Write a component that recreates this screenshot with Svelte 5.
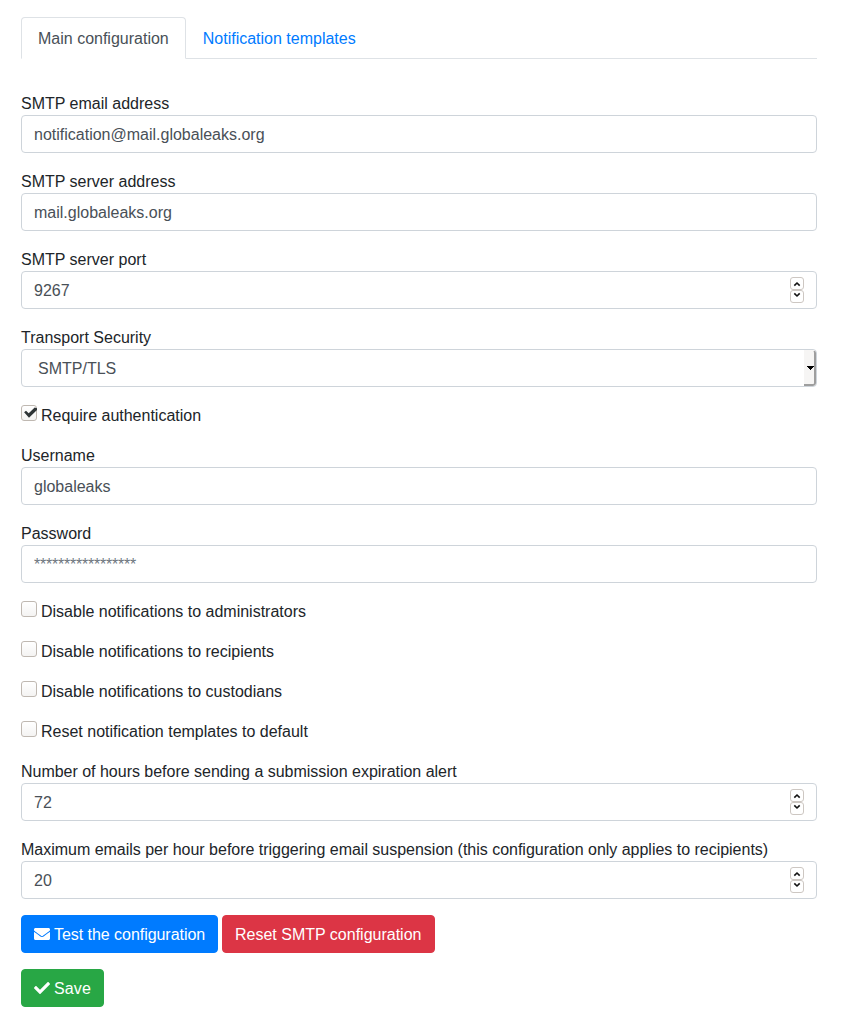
<script>
  let form = $state({
    email: 'notification@mail.globaleaks.org',
    server: 'mail.globaleaks.org',
    port: '9267',
    username: 'globaleaks',
    password: '',
    hours: '72',
    maximum: '20'
  });
  let authentication = $state(true);
  let options = $state([
    { label: 'Disable notifications to administrators', on: false },
    { label: 'Disable notifications to recipients', on: false },
    { label: 'Disable notifications to custodians', on: false },
    { label: 'Reset notification templates to default', on: false }
  ]);
  const step = (key, amount) => (form[key] = String(Number(form[key]) + amount));
</script>

{#snippet field(label, key, placeholder = '')}
  <label class="group">
    <span class="text">{label}</span>
    <input class="control" type="text" {placeholder} bind:value={form[key]} />
  </label>
{/snippet}

{#snippet number(label, key)}
  <div class="group">
    <label class="text" class:long={label.length > 40} for={key}>{label}</label>
    <div class="control numeric">
      <input id={key} type="text" inputmode="numeric" bind:value={form[key]} />
      <div class="spinner">
        <button type="button" aria-label="Increase" onclick={() => step(key, 1)}>
          <svg width="6" height="4" viewBox="0 0 6 4"><path d="M.3 3.6 3 1l2.7 2.6" /></svg>
        </button>
        <button type="button" aria-label="Decrease" onclick={() => step(key, -1)}>
          <svg class="down" width="6" height="4" viewBox="0 0 6 4"><path d="M.3.4 3 3 5.7.4" /></svg>
        </button>
      </div>
    </div>
  </div>
{/snippet}

{#snippet tick()}
  <svg class="tick" viewBox="0 0 16 16"><path d="M3.1 7.2 5 5.7l2.7 2.6L13.7 2.4 16 3.2V4.9L8 12.7Z" /></svg>
{/snippet}

<main>
  <ul class="tabs">
    <li><a class="active" href="#main">Main configuration</a></li>
    <li><a href="#templates">Notification templates</a></li>
  </ul>

  <form>
    {@render field('SMTP email address', 'email')}
    {@render field('SMTP server address', 'server')}
    {@render number('SMTP server port', 'port')}
    <div class="group">
      <span class="text">Transport Security</span>
      <div class="control select" role="combobox" aria-label="Transport Security" aria-expanded="false" aria-controls="security" tabindex="0">
        <span id="security">SMTP/TLS</span>
        <div class="arrow"><svg width="7" height="4" viewBox="0 0 7 4"><path d="M0 0h7v1H6v1H5v1H4v1H3V3H2V2H1V1H0Z" /></svg></div>
      </div>
    </div>

    <label class="group check">
      <input type="checkbox" bind:checked={authentication} />
      <span class="box">{#if authentication}{@render tick()}{/if}</span>
      <span class="text">Require authentication</span>
    </label>

    {@render field('Username', 'username')}
    {@render field('Password', 'password', '*****************')}

    {#each options as option}
      <label class="group check">
        <input type="checkbox" bind:checked={option.on} />
        <span class="box">{#if option.on}{@render tick()}{/if}</span>
        <span class="text">{option.label}</span>
      </label>
    {/each}

    {@render number('Number of hours before sending a submission expiration alert', 'hours')}
    {@render number('Maximum emails per hour before triggering email suspension (this configuration only applies to recipients)', 'maximum')}

    <div class="actions">
      <button type="button" class="btn primary">
        <svg class="icon" viewBox="0 0 512 512"><path d="M502.3 190.8c3.9-3.1 9.7-.2 9.7 4.7V400c0 26.5-21.5 48-48 48H48c-26.5 0-48-21.5-48-48V195.6c0-5 5.7-7.8 9.7-4.7 22.4 17.4 52.1 39.5 154.1 113.6 21.1 15.4 56.7 47.8 92.2 47.6 35.7.3 72-32.8 92.3-47.6 102-74.1 131.6-96.3 154-113.7zM256 320c23.2.4 56.6-29.2 73.4-41.4 132.7-96.3 142.8-104.7 173.4-128.7 5.8-4.5 9.2-11.5 9.2-18.9v-19c0-26.5-21.5-48-48-48H48c-26.5 0-48 21.5-48 48v19c0 7.4 3.4 14.3 9.2 18.9 30.6 23.9 40.7 32.4 173.4 128.7 16.8 12.2 50.2 41.8 73.4 41.4z" /></svg>
        <span class="text">Test the configuration</span>
      </button>
      <button type="button" class="btn danger"><span class="text">Reset SMTP configuration</span></button>
    </div>
    <div class="actions">
      <button type="button" class="btn success">
        <svg class="icon" viewBox="0 0 512 512"><path d="M173.898 439.404l-166.4-166.4c-9.997-9.997-9.997-26.206 0-36.204l36.203-36.204c9.997-9.998 26.207-9.998 36.204 0L192 312.69 432.095 72.596c9.997-9.997 26.207-9.997 36.204 0l36.203 36.204c9.997 9.997 9.997 26.206 0 36.204l-294.4 294.401c-9.998 9.997-26.207 9.997-36.204-.001z" /></svg>
        <span class="text">Save</span>
      </button>
    </div>
  </form>
</main>

<style>
  :global(body) { background: #fff; }
  main, main * { box-sizing: border-box; }
  main {
    width: 796px;
    margin-left: 21px;
    padding-top: 17px;
    font: 16px/24px "Liberation Sans", Arial, sans-serif;
    color: #212529;
  }
  .text { padding-top: 2px; line-height: 22px; white-space: nowrap; }
  .long { letter-spacing: -0.016px; }
  .tabs {
    display: flex;
    list-style: none;
    margin: 0 0 32px;
    padding: 0;
    border-bottom: 1px solid #dee2e6;
  }
  .tabs li { margin-bottom: -1px; }
  .tabs a {
    display: block;
    padding: 9px 16px 7px;
    border: 1px solid transparent;
    border-radius: 4px 4px 0 0;
    color: #007bff;
    text-decoration: none;
  }
  .tabs a.active {
    color: #495057;
    background: #fff;
    border-color: #dee2e6 #dee2e6 #fff;
  }
  .group { display: flex; flex-direction: column; margin-bottom: 16px; }
  .control {
    width: 100%;
    height: 38px;
    padding: 7px 12px 5px;
    border: 1px solid #ced4da;
    border-radius: 4px;
    background: #fff;
    font: inherit;
    color: #495057;
    outline: none;
  }
  .control::placeholder { color: #6c757d; opacity: 1; letter-spacing: -0.225px; }
  .numeric { display: flex; align-items: center; padding: 0 12px; }
  .numeric input {
    flex: 1;
    min-width: 0;
    height: 26px;
    padding: 2px 0 0;
    border: 0;
    outline: none;
    font: inherit;
    color: inherit;
    background: none;
  }
  .spinner { display: flex; flex-direction: column; width: 14px; }
  .spinner button {
    display: flex;
    align-items: center;
    justify-content: center;
    width: 14px;
    height: 13px;
    padding: 0;
    border: 1px solid #cdc7c2;
    border-radius: 3px;
    background: #fff;
  }
  .spinner svg { fill: none; stroke: #111; stroke-width: 1.6; overflow: visible; }
  .spinner .down { margin-bottom: 4px; }
  .select { display: flex; padding: 0 0 0 16px; overflow: hidden; }
  .select > span { flex: 1; line-height: 38px; }
  .arrow {
    display: flex;
    align-items: center;
    justify-content: center;
    width: 12px;
    height: 36px;
    padding-left: 2px;
    background: #f6f5f4;
    border-right: 2px solid #9e9e9e;
    border-bottom: 2px solid #9e9e9e;
    border-top: 1px solid #f6f5f4;
    border-radius: 0 3px 3px 0;
  }
  .arrow svg { flex: none; fill: #000; }
  .check { flex-direction: row; gap: 4px; }
  .check input { appearance: none; width: 0; height: 0; margin: 0 -4px 0 0; }
  .box {
    width: 16px;
    height: 16px;
    margin-top: 2px;
    border: 1px solid #bfb8b1;
    border-radius: 3px;
    background: linear-gradient(#fff, #f4f3f2);
  }
  .tick { display: block; width: 16px; height: 16px; margin: -1px; fill: #2e3436; }
  .actions { display: flex; gap: 4px; margin-bottom: 16px; }
  .btn {
    display: flex;
    align-items: center;
    gap: 4px;
    height: 38px;
    padding: 6px 12px;
    border: 1px solid transparent;
    border-radius: 4px;
    font: inherit;
    color: #fff;
  }
  .primary { width: 197px; letter-spacing: -0.045px; background: #007bff; border-color: #007bff; }
  .danger { width: 213px; background: #dc3545; border-color: #dc3545; }
  .success { width: 83px; letter-spacing: 0.15px; background: #28a745; border-color: #28a745; }
  .icon { flex: none; width: 16px; height: 16px; fill: currentColor; }
</style>
